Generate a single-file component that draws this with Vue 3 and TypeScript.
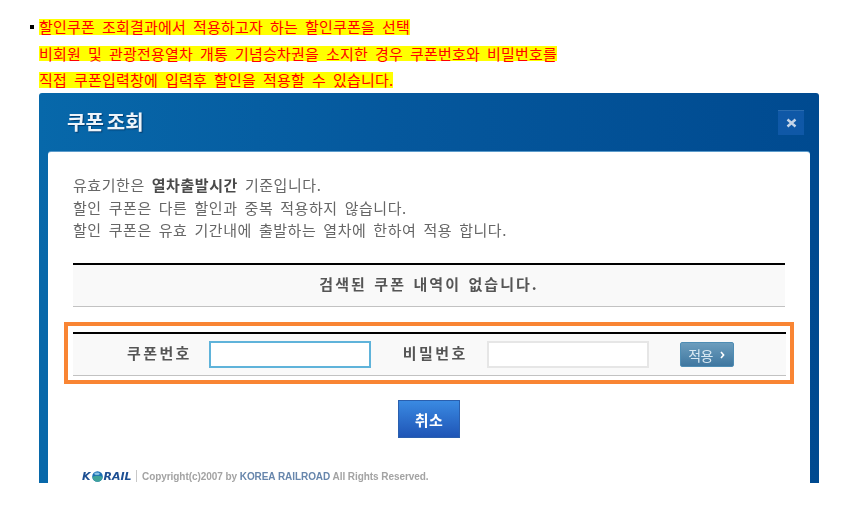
<script setup lang="ts">
const notices: string[] = [
  '할인쿠폰 조회결과에서 적용하고자 하는 할인쿠폰을 선택',
  '비회원 및 관광전용열차 개통 기념승차권을 소지한 경우 쿠폰번호와 비밀번호를',
  '직접 쿠폰입력창에 입력후 할인을 적용할 수 있습니다.',
]
</script>

<template>
  <div class="page">
    <ul class="notices">
      <li v-for="(line, i) in notices" :key="i" class="notice" :class="{ first: i === 0 }">
        <i v-if="i === 0" class="bullet"></i>
        <span class="mark">{{ line }}</span>
      </li>
    </ul>

    <section class="card">
      <header class="card-head">
        <h1 class="title">쿠폰 조회</h1>
        <button class="close" type="button" aria-label="닫기">
          <svg width="11" height="10" viewBox="0 0 11 10">
            <path d="M1.5 1.5 9.5 8.5M9.5 1.5 1.5 8.5" stroke="#c4d4e8" stroke-width="2.4" fill="none" />
          </svg>
        </button>
      </header>

      <div class="panel">
        <div class="notes">
          <p>유효기한은 <strong>열차출발시간</strong> 기준입니다.</p>
          <p>할인 쿠폰은 다른 할인과 중복 적용하지 않습니다.</p>
          <p>할인 쿠폰은 유효 기간내에 출발하는 열차에 한하여 적용 합니다.</p>
        </div>

        <div class="result">검색된 쿠폰 내역이 없습니다.</div>

        <div class="highlight">
          <div class="form-row">
            <label class="label label-a">쿠폰번호</label>
            <input class="field focused" type="text" />
            <label class="label label-b">비밀번호</label>
            <input class="field" type="password" />
            <button class="apply" type="button">
              <span>적용</span>
              <svg width="5" height="8" viewBox="0 0 5 8">
                <path d="M1 1 3.6 4 1 7" stroke="#fff" stroke-width="1.6" fill="none" />
              </svg>
            </button>
          </div>
        </div>

        <div class="actions">
          <button class="cancel" type="button">취소</button>
        </div>

        <footer class="footer">
          <span class="logo">K<svg class="globe" width="11" height="11" viewBox="0 0 11 11">
              <circle cx="5.5" cy="5.5" r="5.3" fill="#1a6fb5" />
              <path d="M.3 6C3 4.4 8 4.4 10.7 6 10.2 9 8 10.8 5.5 10.8S.8 9 .3 6Z" fill="#3fa39a" />
              <ellipse cx="5" cy="2.8" rx="2.8" ry="1.3" fill="#8cc4e6" />
            </svg>RAIL</span>
          <i class="sep"></i>
          <span class="copy">Copyright(c)2007 by <b>KOREA RAILROAD</b> All Rights Reserved.</span>
        </footer>
      </div>
    </section>
  </div>
</template>

<style>
html,
body {
  margin: 0;
  background: #fff;
}
</style>

<style scoped>
.page {
  width: 856px;
  height: 506px;
  box-sizing: border-box;
  padding-top: 19px;
  overflow: hidden;
  background: #fff;
  font-family: "Noto Sans CJK KR", "Noto Sans", sans-serif;
}
.notices {
  list-style: none;
  margin: 0 0 5.5px;
  padding: 0 0 0 39px;
  display: flex;
  flex-direction: column;
  gap: 11px;
}
.notice {
  display: flex;
  align-items: center;
  gap: 5px;
  height: 15.5px;
}
.notice.first {
  margin-left: -9px;
}
.bullet {
  width: 4px;
  height: 4px;
  background: #000;
}
.mark {
  display: block;
  font-size: 15px;
  line-height: 15.5px;
  height: 15.5px;
  letter-spacing: 0.2px;
  word-spacing: 3.44px;
  color: #f00;
  background: #ff0;
  white-space: nowrap;
}
.card {
  width: 780px;
  height: 390px;
  margin-left: 39px;
  box-sizing: border-box;
  padding: 0 9px;
  border-radius: 3px 3px 0 0;
  overflow: hidden;
  background: linear-gradient(90deg, #0768aa 0%, #05589d 45%, #004a90 100%);
  display: flex;
  flex-direction: column;
  filter: blur(0.35px);
}
.card-head {
  height: 59px;
  flex: none;
  display: flex;
  align-items: flex-start;
  justify-content: space-between;
  padding: 17px 6px 0 19px;
  box-sizing: border-box;
}
.title {
  margin: 0;
  font-size: 20px;
  line-height: 24px;
  font-weight: 700;
  color: #eef4fa;
  letter-spacing: 0;
  word-spacing: -1.5px;
  text-shadow: 1px 1px 1px rgba(0, 30, 70, 0.6);
}
.close {
  width: 26px;
  height: 25px;
  padding: 0;
  border: 0;
  background: #0f58a7;
  border-top: 1px solid #2a6cb0;
  display: flex;
  align-items: center;
  justify-content: center;
}
.panel {
  flex: 1;
  background: #fff;
  border-radius: 3px 3px 0 0;
  box-shadow: 0 -1px 0 #5b9bcb;
  padding: 22px 25px 0;
  color: #666;
}
.notes p {
  margin: 0;
  font-size: 15px;
  line-height: 22.5px;
  letter-spacing: 0.55px;
  word-spacing: 3.1px;
  white-space: nowrap;
}
.notes strong {
  color: #4a4a4a;
  font-weight: 700;
}
.result {
  margin-top: 21.5px;
  height: 43.5px;
  box-sizing: border-box;
  border-top: 2.5px solid #000;
  border-bottom: 1.5px solid #c2c2c2;
  background: #f9f9f9;
  padding-bottom: 4px;
  display: flex;
  align-items: center;
  justify-content: center;
  font-size: 15px;
  font-weight: 700;
  color: #555;
  letter-spacing: 2px;
  word-spacing: 2.2px;
}
.highlight {
  margin: 15.5px -9px 0;
  padding: 6px 4px 4px 5px;
  border: 4px solid #f98533;
  height: 62px;
  box-sizing: border-box;
}
.form-row {
  height: 44px;
  box-sizing: border-box;
  border-top: 2.5px solid #000;
  border-bottom: 1.5px solid #c2c2c2;
  background: #f9f9f9;
  display: flex;
  align-items: center;
}
.label {
  font-size: 15px;
  font-weight: 700;
  color: #555;
  letter-spacing: 2.4px;
  white-space: nowrap;
  margin-bottom: 5px;
}
.label-a {
  margin-left: 54px;
  margin-right: 17px;
}
.label-b {
  margin-left: 32px;
  margin-right: 19px;
}
.field {
  width: 162px;
  height: 27px;
  box-sizing: border-box;
  margin: 0;
  padding: 0 4px;
  border: 2px solid #e6e6e6;
  background: #fff;
  outline: none;
}
.field.focused {
  border-color: #5fb3da;
}
.apply {
  width: 54px;
  height: 25px;
  margin-left: 31px;
  padding: 0;
  border: 1px solid #4f8db4;
  border-radius: 2px;
  background: linear-gradient(#6c9dbd, #3f77a0);
  color: #d9e9f3;
  font-family: inherit;
  font-size: 14px;
  letter-spacing: -0.4px;
  display: flex;
  align-items: center;
  justify-content: center;
  gap: 7px;
}
.actions {
  margin-top: 16px;
  display: flex;
  justify-content: center;
}
.cancel {
  width: 62px;
  height: 38px;
  padding: 0;
  border: 1px solid #2a5fae;
  background: linear-gradient(#3a8ae2, #1f55b6);
  color: #fff;
  font-family: inherit;
  font-size: 15px;
  font-weight: 700;
  letter-spacing: 0.5px;
}
.footer {
  margin-top: 32px;
  margin-left: 9px;
  height: 12px;
  display: flex;
  align-items: center;
}
.logo {
  display: flex;
  align-items: center;
  font-family: "DejaVu Sans", sans-serif;
  font-style: italic;
  font-weight: 700;
  font-size: 11px;
  color: #1d4f93;
  width: 50px;
}
.globe {
  margin: 0 1px;
}
.sep {
  width: 1px;
  height: 12px;
  margin: 0 5px 0 4px;
  background: #c8c8c8;
}
.copy {
  font-family: "Liberation Sans", sans-serif;
  font-size: 10px;
  font-weight: 700;
  letter-spacing: -0.06px;
  color: #a3a3a3;
  white-space: nowrap;
}
.copy b {
  color: #6786ac;
}
</style>
